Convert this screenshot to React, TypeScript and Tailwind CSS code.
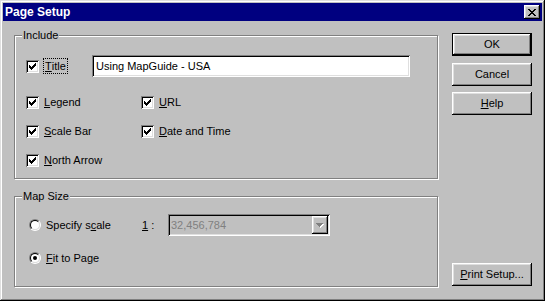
import type { ReactNode } from 'react';

/**
 * Page Setup — a Windows 95 style dialog: an "Include" group of checkboxes,
 * a "Map Size" group with two radios and a disabled scale combo, and the
 * usual OK / Cancel / Help / Print Setup buttons down the right side.
 */

const raised =
  'shadow-[inset_-1px_-1px_0_#000,inset_1px_1px_0_#fff,inset_-2px_-2px_0_#808080,inset_2px_2px_0_#dfdfdf]';
const sunken =
  'shadow-[inset_1px_1px_0_#808080,inset_-1px_-1px_0_#fff,inset_2px_2px_0_#000,inset_-2px_-2px_0_#dfdfdf]';

export default function App() {
  return (
    <div className="flex h-[301px] w-[545px] flex-col bg-[#c0c0c0] p-[3px] font-['Liberation_Sans',Arial,sans-serif] text-[11px] leading-[13px] text-black shadow-[inset_-1px_-1px_0_#000,inset_1px_1px_0_#dfdfdf,inset_-2px_-2px_0_#808080,inset_2px_2px_0_#fff]">
      {/* Caption */}
      <div className="flex h-[18px] items-center justify-between bg-[#000080] pl-[2px] pr-[2px]">
        <span className="text-[12px] font-bold text-white">Page Setup</span>
        <button
          type="button"
          className={`flex h-[14px] w-[16px] items-center justify-center bg-[#c0c0c0] ${raised}`}
        >
          <CloseGlyph />
        </button>
      </div>

      <div className="flex flex-1">
        {/* Groups */}
        <div className="flex flex-col pl-[11px] pt-[14px]">
          <GroupBox label="Include" className="h-[144px]">
            <div className="pl-[11px] pt-[19px]">
              <div className="flex h-[22px] items-center">
                <div className="flex w-[66px] items-center">
                  <CheckBox />
                  <span className="ml-[4px] flex h-[16px] items-center border border-dotted border-black px-[1px]">
                    <u>T</u>itle
                  </span>
                </div>
                <div className={`flex h-[22px] w-[318px] items-center bg-white pl-[4px] ${sunken}`}>
                  Using MapGuide - USA
                </div>
              </div>

              <div className="mt-[11px] grid grid-cols-[115px_1fr] auto-rows-[29px] items-center">
                <CheckRow accel="L" rest="egend" />
                <CheckRow accel="U" rest="RL" />
                <CheckRow accel="S" rest="cale Bar" />
                <CheckRow accel="D" rest="ate and Time" />
                <CheckRow accel="N" rest="orth Arrow" />
              </div>
            </div>
          </GroupBox>

          <GroupBox label="Map Size" className="mt-[17px] h-[91px]">
            <div className="pl-[14px] pt-[17px]">
              <div className="flex h-[22px] items-center">
                <div className="flex w-[113px] items-center">
                  <Radio />
                  <span className="ml-[5px]">
                    Specify s<u>c</u>ale
                  </span>
                </div>
                <span className="w-[26px]">
                  <u>1</u> :
                </span>
                <div className={`flex h-[22px] w-[162px] bg-[#c0c0c0] p-[2px] ${sunken}`}>
                  <span className="flex flex-1 items-center pl-[1px] text-[#808080]">32,456,784</span>
                  <div className={`flex w-[16px] items-center justify-center ${raised}`}>
                    <DisabledArrow />
                  </div>
                </div>
              </div>

              <div className="mt-[11px] flex h-[22px] items-center">
                <Radio checked />
                <span className="ml-[5px]">
                  <u>F</u>it to Page
                </span>
              </div>
            </div>
          </GroupBox>
        </div>

        {/* Buttons */}
        <div className="ml-[14px] flex w-[80px] flex-col pb-[12px] pt-[12px]">
          <div className="h-[23px] border border-black">
            <div className={`flex h-full items-center justify-center ${raised}`}>OK</div>
          </div>
          <PushButton className="mt-[7px]">Cancel</PushButton>
          <PushButton className="mt-[6px]">
            <u>H</u>elp
          </PushButton>
          <PushButton className="mt-auto">
            <u>P</u>rint Setup...
          </PushButton>
        </div>
      </div>
    </div>
  );
}

/* ── Pieces ─────────────────────────────── */

function GroupBox({
  label,
  className = '',
  children,
}: {
  label: string;
  className?: string;
  children: ReactNode;
}) {
  return (
    <div
      className={`relative w-[424px] border border-[#808080] shadow-[1px_1px_0_#fff,inset_1px_1px_0_#fff] ${className}`}
    >
      <span className="absolute left-[7px] top-[-8px] bg-[#c0c0c0] px-[1px] leading-[14px]">{label}</span>
      {children}
    </div>
  );
}

function PushButton({ className = '', children }: { className?: string; children: ReactNode }) {
  return (
    <div className={`flex h-[23px] items-center justify-center ${raised} ${className}`}>{children}</div>
  );
}

function CheckRow({ accel, rest }: { accel: string; rest: string }) {
  return (
    <div className="flex items-center">
      <CheckBox />
      <span className="ml-[5px]">
        <u>{accel}</u>
        {rest}
      </span>
    </div>
  );
}

function CheckBox() {
  return (
    <span className={`flex h-[13px] w-[13px] shrink-0 items-center justify-center bg-white ${sunken}`}>
      <svg width="7" height="7" viewBox="0 0 7 7" shapeRendering="crispEdges">
        <path
          d="M0 2h1v3H0z M1 3h1v3H1z M2 4h1v3H2z M3 3h1v3H3z M4 2h1v3H4z M5 1h1v3H5z M6 0h1v3H6z"
          fill="#000"
        />
      </svg>
    </span>
  );
}

function Radio({ checked = false }: { checked?: boolean }) {
  return (
    <span className="flex h-[12px] w-[12px] shrink-0 rounded-full border border-b-white border-l-[#808080] border-r-white border-t-[#808080]">
      <span className="flex flex-1 items-center justify-center rounded-full border border-b-[#dfdfdf] border-l-black border-r-[#dfdfdf] border-t-black bg-white">
        {checked && <span className="h-[4px] w-[4px] rounded-full bg-black" />}
      </span>
    </span>
  );
}

function CloseGlyph() {
  return (
    <svg width="8" height="7" viewBox="0 0 8 7" shapeRendering="crispEdges">
      <path
        d="M0 0h2v1H0z M6 0h2v1H6z M1 1h2v1H1z M5 1h2v1H5z M2 2h4v1H2z M3 3h2v1H3z M2 4h4v1H2z M1 5h2v1H1z M5 5h2v1H5z M0 6h2v1H0z M6 6h2v1H6z"
        fill="#000"
      />
    </svg>
  );
}

function DisabledArrow() {
  return (
    <svg width="8" height="5" viewBox="0 0 8 5" shapeRendering="crispEdges">
      <path d="M1 1h7v1H1z M2 2h5v1H2z M3 3h3v1H3z M4 4h1v1H4z" fill="#fff" />
      <path d="M0 0h7v1H0z M1 1h5v1H1z M2 2h3v1H2z M3 3h1v1H3z" fill="#808080" />
    </svg>
  );
}
